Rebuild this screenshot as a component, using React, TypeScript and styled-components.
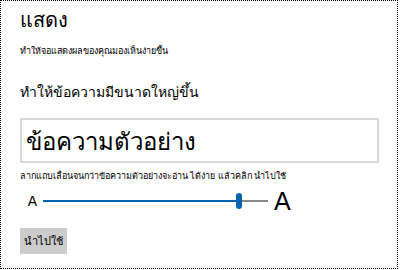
import styled, { createGlobalStyle } from "styled-components";

const Global = createGlobalStyle`
  html, body {
    margin: 0;
    padding: 0;
    background: #fff;
  }
  body {
    font-family: "Noto Sans", "DejaVu Sans", sans-serif;
    color: #000;
  }
`;

const Frame = styled.div`
  box-sizing: border-box;
  width: 398px;
  height: 269px;
  border: 1px dotted #000;
  padding: 0 18px 0 19px;
  display: flex;
  flex-direction: column;
`;

const Title = styled.h1`
  margin: 6px 0 0;
  font-size: 20px;
  font-weight: 400;
  line-height: 26px;
`;

const Hint = styled.p<{ $top?: number }>`
  margin: ${(p) => p.$top ?? 0}px 0 0;
  font-size: 9px;
  line-height: 14px;
`;

const Heading = styled.h2`
  margin: 24px 0 0;
  font-size: 14px;
  font-weight: 400;
  line-height: 20px;
`;

const Sample = styled.div`
  box-sizing: border-box;
  margin-top: 16px;
  height: 45px;
  border: 2px solid #d9d9d9;
  padding: 0 4px;
  font-size: 24px;
  line-height: 41px;
  white-space: nowrap;
`;

const SliderRow = styled.div`
  display: flex;
  align-items: center;
  gap: 6px;
  margin-top: 4px;
  height: 28px;
`;

const SmallA = styled.span`
  width: 17px;
  text-align: right;
  font-family: "Liberation Sans", sans-serif;
  font-size: 14px;
`;

const BigA = styled.span`
  font-family: "Liberation Sans", sans-serif;
  font-size: 25px;
  line-height: 28px;
`;

const Track = styled.div`
  position: relative;
  width: 225px;
  height: 2px;
  background: #8a8a8a;
`;

const Fill = styled.div`
  height: 2px;
  background: #0063b1;
`;

const Thumb = styled.div`
  position: absolute;
  top: -7px;
  width: 6px;
  height: 16px;
  border-radius: 3px;
  background: #0063b1;
  transform: translateX(-3px);
`;

const Apply = styled.button`
  align-self: flex-start;
  margin-top: 13px;
  width: 47px;
  height: 26px;
  border: none;
  background: #cccccc;
  font-family: inherit;
  font-size: 11px;
  color: #000;
  padding: 0;
`;

export default function App() {
  const value = 0.87;
  return (
    <>
      <Global />
      <Frame>
        <Title>แสดง</Title>
        <Hint $top={11}>ทำให้จอแสดงผลของคุณมองเห็นง่ายขึ้น</Hint>
        <Heading>ทำให้ข้อความมีขนาดใหญ่ขึ้น</Heading>
        <Sample>ข้อความตัวอย่าง</Sample>
        <Hint $top={6}>
          ลากแถบเลื่อนจนกว่าข้อความตัวอย่างจะอ่าน ได้ง่าย แล้วคลิก นำไปใช้
        </Hint>
        <SliderRow>
          <SmallA>A</SmallA>
          <Track>
            <Fill style={{ width: `${value * 100}%` }} />
            <Thumb style={{ left: `${value * 100}%` }} />
          </Track>
          <BigA>A</BigA>
        </SliderRow>
        <Apply>นำไปใช้</Apply>
      </Frame>
    </>
  );
}
